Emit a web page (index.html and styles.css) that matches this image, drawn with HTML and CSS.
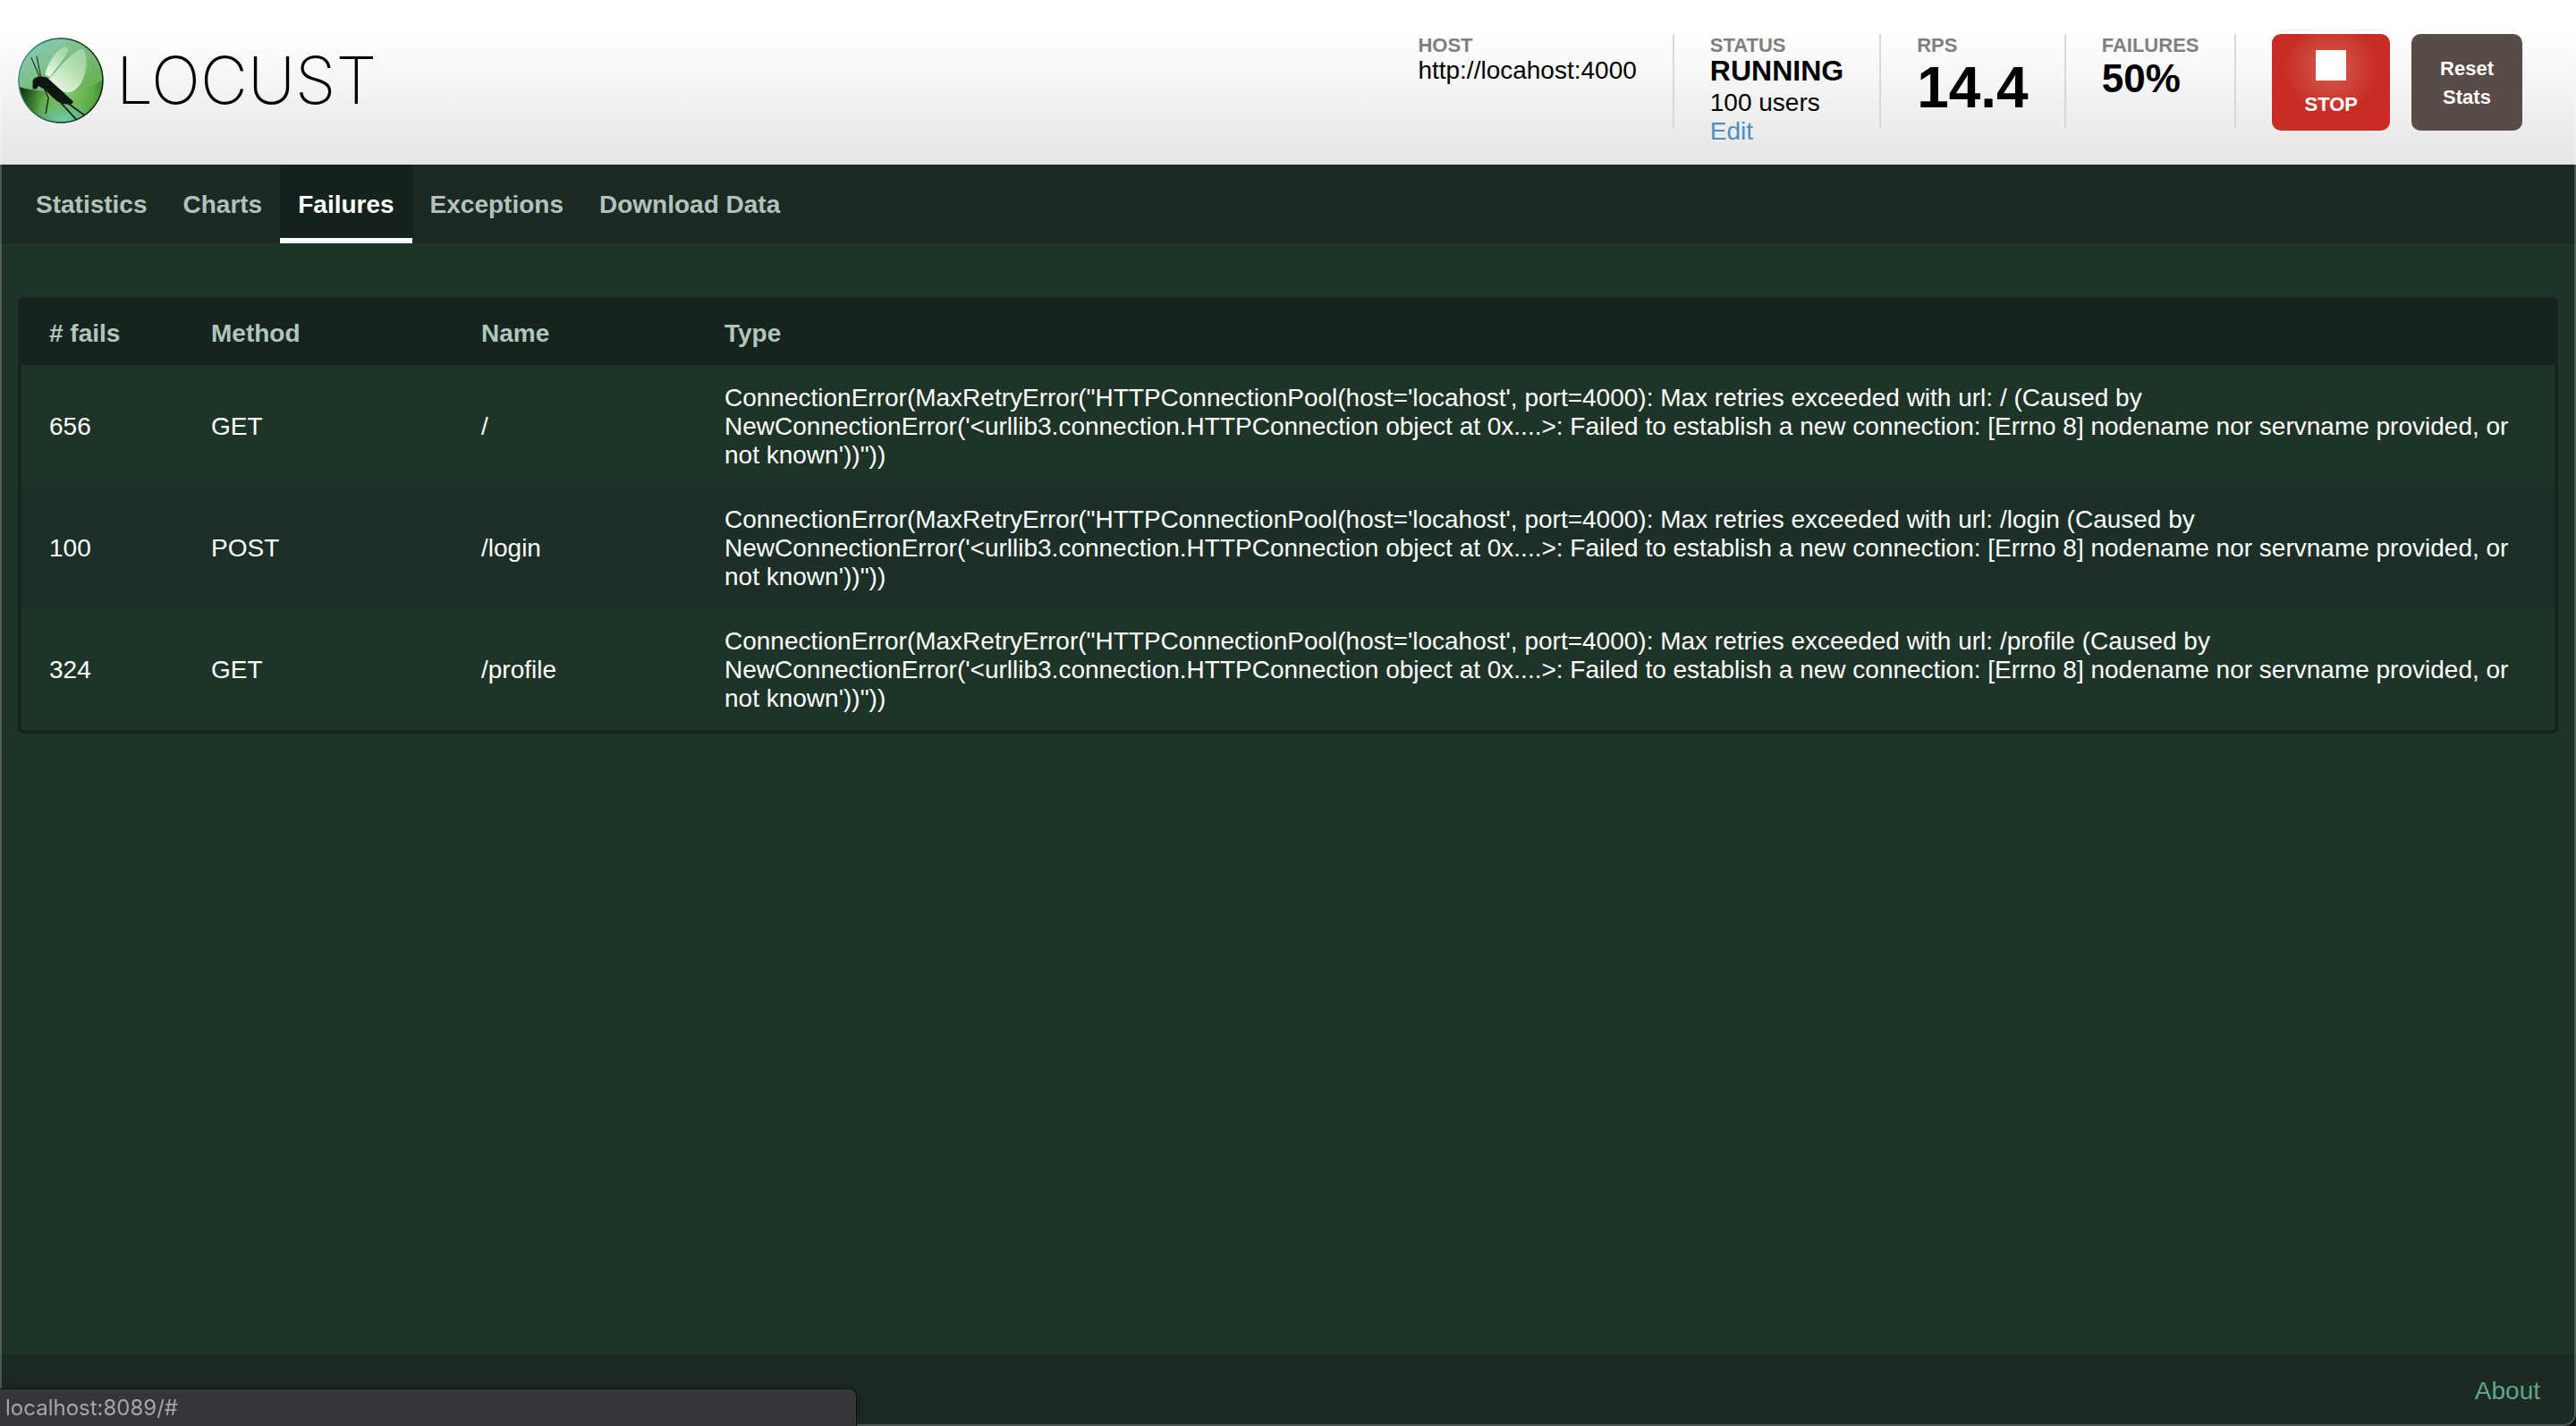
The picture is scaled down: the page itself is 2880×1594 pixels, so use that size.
FILE: index.html
```
<!DOCTYPE html>
<html lang="en">
  <head>
    <meta charset="UTF-8" />
    <meta name="viewport" content="width=device-width, initial-scale=1.0" />
    <title>Locust</title>
    <link rel="stylesheet" href="styles.css">
  </head>
  <body>
    <header class="top">
      <div class="logo">
        <svg class="logo-ball" viewBox="32 38 284 284" aria-hidden="true">
          <defs>
            <radialGradient id="ball" cx="55%" cy="62%" r="60%">
              <stop offset="0" stop-color="#8ccb6a" />
              <stop offset="0.55" stop-color="#5eaa48" />
              <stop offset="0.85" stop-color="#2f7426" />
              <stop offset="1" stop-color="#0c3a10" />
            </radialGradient>
            <linearGradient id="shade" x1="0" y1="0" x2="0.9" y2="0.3">
              <stop offset="0" stop-color="#06260c" stop-opacity="0.9" />
              <stop offset="0.45" stop-color="#06260c" stop-opacity="0" />
            </linearGradient>
            <linearGradient id="gloss" x1="0" y1="0" x2="0.8" y2="0.8">
              <stop offset="0" stop-color="#6fd0d6" />
              <stop offset="0.35" stop-color="#84c6a0" />
              <stop offset="1" stop-color="#6db35c" />
            </linearGradient>
            <radialGradient id="glow" cx="50%" cy="50%" r="50%">
              <stop offset="0" stop-color="#6fc9ae" />
              <stop offset="1" stop-color="#6fc9ae" stop-opacity="0" />
            </radialGradient>
            <linearGradient id="wing" x1="0" y1="1" x2="0.7" y2="0">
              <stop offset="0" stop-color="#ffffff" stop-opacity="0.95" />
              <stop offset="0.5" stop-color="#dff5da" stop-opacity="0.75" />
              <stop offset="1" stop-color="#c9ecc6" stop-opacity="0.5" />
            </linearGradient>
            <linearGradient id="rim" x1="0" y1="0" x2="1" y2="0.3">
              <stop offset="0" stop-color="#4b9c9a" />
              <stop offset="0.6" stop-color="#1d4c2c" />
              <stop offset="1" stop-color="#06170a" />
            </linearGradient>
            <clipPath id="round"><circle cx="174" cy="180" r="140" /></clipPath>
          </defs>
          <g clip-path="url(#round)">
            <rect x="32" y="38" width="284" height="284" fill="url(#ball)" />
            <rect x="32" y="190" width="284" height="132" fill="url(#shade)" />
            <ellipse cx="180" cy="310" rx="120" ry="60" fill="url(#glow)" />
            <path d="M32 38H316V176C270 208 200 218 130 216C90 214 60 208 32 200Z" fill="url(#gloss)" />
            <path d="M122 160C132 120 156 82 182 70C196 66 202 76 194 90C180 116 156 142 138 168Z" fill="url(#wing)" />
            <path d="M134 176C160 148 200 98 234 78C252 70 262 92 258 132C254 178 232 214 202 219C180 220 152 202 134 176Z" fill="url(#wing)" />
            <path d="M81 208L81 181C86 170 98 166 108 167C120 167 130 170 136 177C150 190 178 214 198 234L216 250L208 259L176 257C156 246 140 230 126 214C114 206 106 202 100 198L94 208Z" fill="#0e1610" />
            <g fill="none" stroke="#17202a" stroke-linejoin="round">
              <path d="M104 168L76 104M108 168L94 98" stroke-width="3" />
              <path d="M120 208L133 238L124 290" stroke-width="4" />
              <path d="M176 256L226 310M196 254L254 296" stroke-width="5" />
            </g>
          </g>
          <circle cx="174" cy="180" r="139" fill="none" stroke="url(#rim)" stroke-width="4" />
        </svg>
        <span class="logo-name">LOCUST</span>
      </div>

      <div class="boxes">
        <div class="box">
          <div class="label">HOST</div>
          <div class="value">http://locahost:4000</div>
        </div>
        <div class="box">
          <div class="label">STATUS</div>
          <div class="state">RUNNING</div>
          <div class="value">100 users</div>
          <a class="edit" href="#">Edit</a>
        </div>
        <div class="box">
          <div class="label">RPS</div>
          <div class="rps">14.4</div>
        </div>
        <div class="box">
          <div class="label">FAILURES</div>
          <div class="fail-ratio">50%</div>
        </div>
        <div class="actions">
          <button class="btn stop-btn" type="button"><span class="stop-icon"></span>STOP</button>
          <button class="btn reset-btn" type="button">Reset<br>Stats</button>
        </div>
      </div>
    </header>

    <nav class="menu">
      <a href="#">Statistics</a>
      <a href="#">Charts</a>
      <a href="#" class="active">Failures</a>
      <a href="#">Exceptions</a>
      <a href="#">Download Data</a>
    </nav>

    <main class="content">
      <table class="errors">
        <thead>
          <tr>
            <th class="col-fails"># fails</th>
            <th class="col-method">Method</th>
            <th class="col-name">Name</th>
            <th>Type</th>
          </tr>
        </thead>
        <tbody>
          <tr>
            <td>656</td>
            <td>GET</td>
            <td>/</td>
            <td>ConnectionError(MaxRetryError("HTTPConnectionPool(host='locahost', port=4000): Max retries exceeded with url: / (Caused by NewConnectionError('&lt;urllib3.connection.HTTPConnection object at 0x....&gt;: Failed to establish a new connection: [Errno 8] nodename nor servname provided, or not known'))"))</td>
          </tr>
          <tr>
            <td>100</td>
            <td>POST</td>
            <td>/login</td>
            <td>ConnectionError(MaxRetryError("HTTPConnectionPool(host='locahost', port=4000): Max retries exceeded with url: /login (Caused by NewConnectionError('&lt;urllib3.connection.HTTPConnection object at 0x....&gt;: Failed to establish a new connection: [Errno 8] nodename nor servname provided, or not known'))"))</td>
          </tr>
          <tr>
            <td>324</td>
            <td>GET</td>
            <td>/profile</td>
            <td>ConnectionError(MaxRetryError("HTTPConnectionPool(host='locahost', port=4000): Max retries exceeded with url: /profile (Caused by NewConnectionError('&lt;urllib3.connection.HTTPConnection object at 0x....&gt;: Failed to establish a new connection: [Errno 8] nodename nor servname provided, or not known'))"))</td>
          </tr>
        </tbody>
      </table>
    </main>

    <footer class="bottom">
      <a href="#">About</a>
    </footer>

    <div class="window-edge"></div>
    <div class="link-status">localhost:8089/#</div>
  </body>
</html>
```
FILE: styles.css
```
* {
  box-sizing: border-box;
}

body {
  margin: 0;
  min-height: 100vh;
  display: flex;
  flex-direction: column;
  background-color: #1f3429;
  color: #fff;
  font-family: "Liberation Sans", Arial, sans-serif;
  font-size: 28px;
  line-height: 32px;
}

a {
  text-decoration: none;
}

/* header */

.top {
  display: flex;
  justify-content: space-between;
  align-items: flex-start;
  padding: 38px 60px 38px 20px;
  background: linear-gradient(#fff 20%, #e5e5e5);
  color: #000;
}

.logo {
  display: flex;
  align-items: center;
  gap: 14px;
  padding-top: 4px;
}

.logo-ball {
  width: 96px;
  height: 96px;
}

.logo-name {
  font-family: Inter, sans-serif;
  font-size: 73px;
  font-weight: 200;
  line-height: 94px;
}

.boxes {
  display: flex;
  height: 108px;
}

.box {
  height: 106px;
  padding-right: 40px;
  margin-right: 40px;
  border-right: 2px solid #d8d8d8;
}

.label {
  color: #7f7f7f;
  font-size: 22px;
  font-weight: bold;
  line-height: 25px;
}

.state {
  font-size: 32px;
  font-weight: bold;
  line-height: 32px;
  margin-bottom: 4px;
}

.edit {
  display: block;
  color: #4b8fbe;
}

.rps {
  font-size: 64px;
  font-weight: bold;
  line-height: 70px;
}

.fail-ratio {
  font-size: 44px;
  font-weight: bold;
  line-height: 50px;
}

.actions {
  display: flex;
  gap: 24px;
}

.btn {
  border: none;
  border-radius: 10px;
  color: #fff;
  font-family: inherit;
  font-size: 22px;
  font-weight: bold;
  line-height: 32px;
  cursor: pointer;
}

.stop-btn {
  display: flex;
  flex-direction: column;
  align-items: center;
  gap: 11px;
  padding: 18px 36px 0;
  background: radial-gradient(circle at 50% 35%, #d2544b 0, #d04a41 20px, #c72d24 52px);
}

.stop-icon {
  width: 34px;
  height: 34px;
  background-color: #fff;
}

.reset-btn {
  min-width: 124px;
  padding: 2px 30px 0;
  background-color: #584b48;
}

/* menu */

.menu {
  display: flex;
  padding: 0 20px;
  background-color: #1b2a23;
}

.menu a {
  padding: 29px 20px 21px;
  border-bottom: 6px solid transparent;
  color: #b3c3bc;
  font-weight: bold;
}

.menu a.active {
  background-color: #15211b;
  border-bottom-color: #fff;
  color: #fff;
}

/* failures table */

.content {
  flex: 1;
  padding: 60px 20px;
}

.errors {
  width: 100%;
  border: 4px solid #16241d;
  border-radius: 6px;
  border-spacing: 0;
}

.errors th,
.errors td {
  padding: 21px 30px 19px 31px;
  text-align: left;
  vertical-align: middle;
}

.errors th {
  background-color: #16241d;
  color: #b0c6bd;
}

.errors tbody tr:nth-child(even) {
  background-color: #1c3028;
}

.col-fails {
  width: 181px;
}

.col-method {
  width: 302px;
}

.col-name {
  width: 272px;
}

/* footer */

.bottom {
  padding: 25px 40px 23px;
  background-color: #1b2a23;
  text-align: right;
}

.bottom a {
  color: #5fa687;
}

/* thin light line round the window */

.window-edge {
  position: fixed;
  inset: 0;
  border: 2px solid rgba(255, 255, 255, 0.22);
  border-top: none;
  border-bottom-right-radius: 14px;
  box-shadow: 0 0 0 14px #111;
  pointer-events: none;
}

.link-status {
  position: fixed;
  left: 0;
  bottom: 0;
  width: 958px;
  max-width: 100%;
  padding: 5px 6px 4px;
  border: 1px solid #0c130f;
  border-width: 1px 1px 0 0;
  border-top-right-radius: 8px;
  background-color: #343639;
  box-shadow: 0 0 16px rgba(0, 0, 0, 0.2);
  color: #a5a6a8;
  font-family: Inter, sans-serif;
  font-size: 24px;
}
```
